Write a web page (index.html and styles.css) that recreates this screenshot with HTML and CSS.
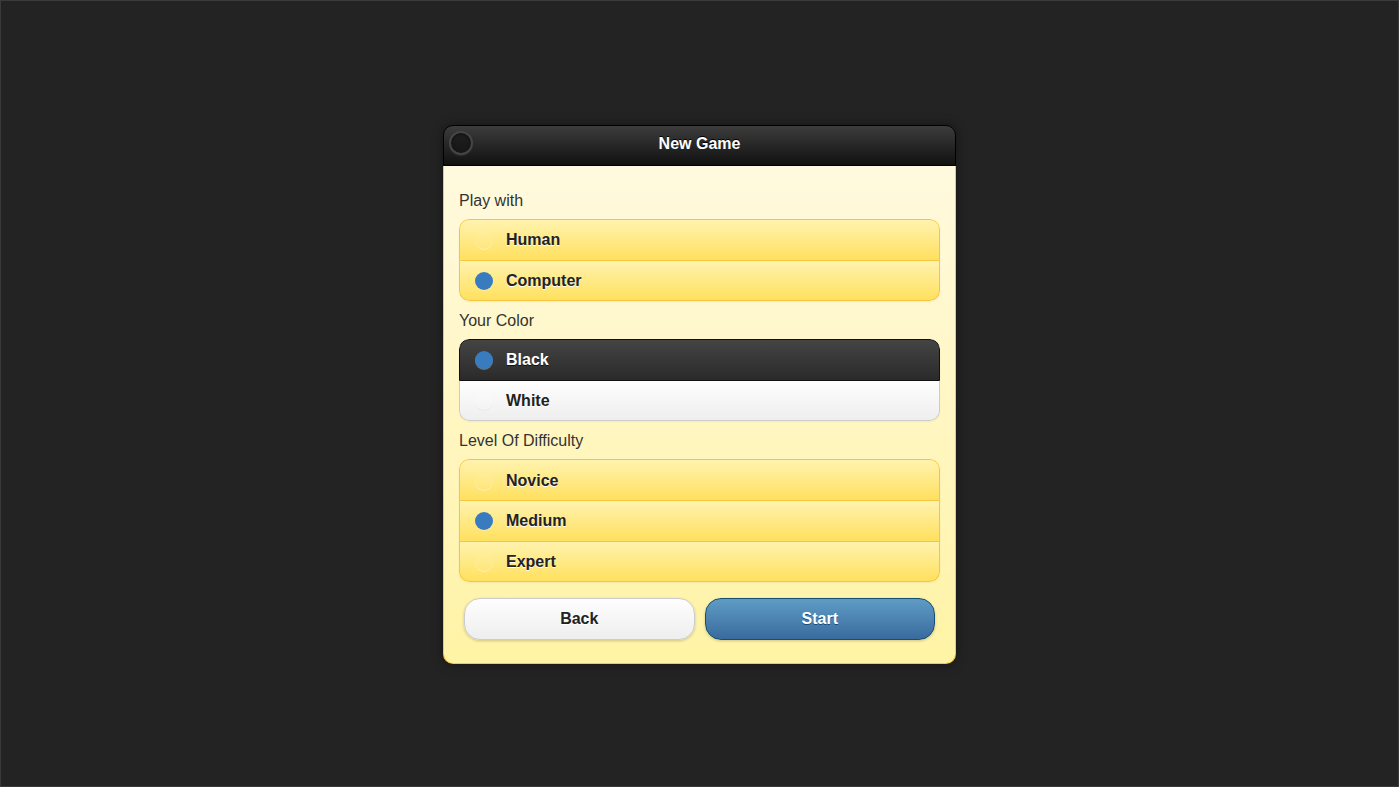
FILE: index.html
```html
<!DOCTYPE html>
<html>
<head>
<meta charset="utf-8">
<title>New Game</title>
<link rel="stylesheet" href="styles.css">
</head>
<body>
<div class="page">
  <div class="dialog">
    <div class="header">
      <span class="close"></span>
      <h1 class="title">New Game</h1>
    </div>
    <div class="content">
      <div class="field">
        <div class="legend">Play with</div>
        <div class="group">
          <div class="opt opt-e"><span class="radio"></span><span class="txt">Human</span></div>
          <div class="opt opt-e"><span class="radio on"></span><span class="txt">Computer</span></div>
        </div>
      </div>
      <div class="field">
        <div class="legend">Your Color</div>
        <div class="group">
          <div class="opt opt-a"><span class="radio on"></span><span class="txt">Black</span></div>
          <div class="opt opt-c"><span class="radio"></span><span class="txt">White</span></div>
        </div>
      </div>
      <div class="field">
        <div class="legend">Level Of Difficulty</div>
        <div class="group">
          <div class="opt opt-e"><span class="radio"></span><span class="txt">Novice</span></div>
          <div class="opt opt-e"><span class="radio on"></span><span class="txt">Medium</span></div>
          <div class="opt opt-e"><span class="radio"></span><span class="txt">Expert</span></div>
        </div>
      </div>
      <div class="buttons">
        <div class="cell"><a class="btn btn-c">Back</a></div>
        <div class="cell"><a class="btn btn-b">Start</a></div>
      </div>
    </div>
  </div>
</div>
</body>
</html>
```

FILE: styles.css
```css
html, body {
  margin: 0;
  padding: 0;
  height: 100%;
}
body {
  background: #232323;
  font-family: "Liberation Sans", Arial, Helvetica, sans-serif;
  font-size: 16px;
  color: #222;
}
.page {
  box-sizing: border-box;
  height: 787px;
  border: 1px solid #3a3a3a;
  display: flex;
  justify-content: center;
  padding-top: 124px;
}
.dialog {
  width: 513px;
  height: 539px;
  border-radius: 10px;
  display: flex;
  flex-direction: column;
  box-shadow: 0 0 12px rgba(0,0,0,0.4);
}
.header {
  box-sizing: border-box;
  height: 41px;
  border: 1px solid #000;
  border-radius: 10px 10px 0 0;
  background: linear-gradient(#3c3c3c, #111);
  display: flex;
  align-items: center;
  justify-content: center;
  padding-bottom: 3px;
  position: relative;
}
.title {
  margin: 0;
  font-size: 16px;
  font-weight: bold;
  color: #fff;
  text-shadow: 0 -1px 0 #000;
  line-height: 20px;
}
.close {
  position: absolute;
  left: 5px;
  top: 5px;
  width: 20px;
  height: 20px;
  border-radius: 50%;
  border: 2px solid #454545;
  background: linear-gradient(#1f1f1f, #161616);
  box-shadow: 0 1px 0 rgba(255,255,255,0.08), inset 0 1px 3px rgba(0,0,0,0.6);
}
.content {
  flex: 1;
  border: 1px solid #f7c942;
  border-top: none;
  border-radius: 0 0 10px 10px;
  background: linear-gradient(#fffadf, #fff3a5);
  padding: 25px 15px 0 15px;
  display: flex;
  flex-direction: column;
}
.field {
  margin-bottom: 10px;
}
.legend {
  line-height: 20px;
  font-size: 16px;
  color: #333;
  margin-bottom: 8px;
}
.group {
  border-radius: 10px;
  overflow: hidden;
  box-shadow: 0 1px 2px rgba(0,0,0,0.05);
}
.opt {
  box-sizing: border-box;
  height: 40.6px;
  display: flex;
  align-items: center;
  border: 1px solid;
  border-top-width: 0;
  padding-left: 15px;
  padding-top: 1px;
  font-weight: bold;
  font-size: 16px;
}
.opt:first-child {
  height: 41.6px;
  border-top-width: 1px;
  border-radius: 10px 10px 0 0;
}
.opt:last-child {
  border-radius: 0 0 10px 10px;
}
.opt-e {
  border-color: #f4c63f;
  background: linear-gradient(#fff3ae, #ffe05e);
  color: #222;
  text-shadow: 0 1px 0 #fff;
}
.opt-a {
  border-color: #111;
  background: linear-gradient(#444, #2a2a2a);
  color: #fff;
  text-shadow: 0 1px 0 #111;
}
.opt-c {
  border-color: #ccc;
  background: linear-gradient(#fefefe, #eeeeee);
  color: #222;
  text-shadow: 0 1px 0 #fff;
}
.radio {
  width: 18px;
  height: 18px;
  border-radius: 50%;
  margin-right: 13px;
  flex: none;
  background: rgba(255,255,255,0.06);
  box-shadow: 0 1px 0 rgba(255,255,255,0.45);
}
.radio.on {
  background: #387bbe;
  box-shadow: 0 1px 0 rgba(255,255,255,0.3);
}
.opt-c .radio {
  background: rgba(255,255,255,0.15);
  box-shadow: 0 1px 0 rgba(0,0,0,0.04);
}
.txt {
  line-height: 20px;
}
.buttons {
  display: grid;
  grid-template-columns: 1fr 1fr;
  margin-top: 6px;
}
.cell {
  padding: 0 5px;
}
.btn {
  display: flex;
  align-items: center;
  justify-content: center;
  box-sizing: border-box;
  height: 42px;
  border: 1px solid;
  border-radius: 16px;
  font-weight: bold;
  font-size: 16px;
  box-shadow: 0 1px 3px rgba(0,0,0,0.2);
}
.btn-c {
  border-color: #ccc;
  background: linear-gradient(#fefefe, #eeeeee);
  color: #222;
  text-shadow: 0 1px 0 #fff;
}
.btn-b {
  border-color: #145072;
  background: linear-gradient(#5f9cc5, #396b9e);
  color: #fff;
  text-shadow: 0 1px 0 #194b7e;
}
```
